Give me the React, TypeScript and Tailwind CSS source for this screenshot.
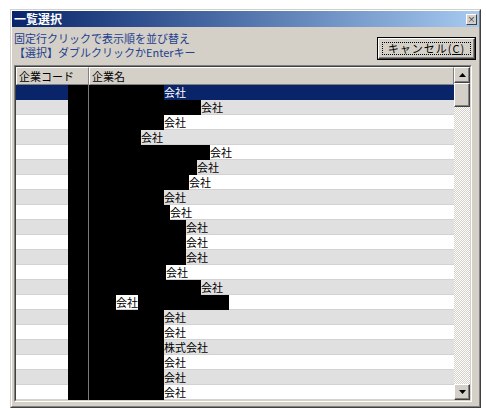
import React from "react";

type Row = { at: number; name: string; tail?: number };

// x offset (px) where each company name starts; the masked part sits before it
const rows: Row[] = [
  { at: 165, name: "会社" },
  { at: 202, name: "会社" },
  { at: 165, name: "会社" },
  { at: 142, name: "会社" },
  { at: 211, name: "会社" },
  { at: 198, name: "会社" },
  { at: 190, name: "会社" },
  { at: 165, name: "会社" },
  { at: 171, name: "会社" },
  { at: 187, name: "会社" },
  { at: 187, name: "会社" },
  { at: 187, name: "会社" },
  { at: 167, name: "会社" },
  { at: 202, name: "会社" },
  { at: 117, name: "会社", tail: 91 },
  { at: 165, name: "会社" },
  { at: 165, name: "会社" },
  { at: 165, name: "株式会社" },
  { at: 165, name: "会社" },
  { at: 165, name: "会社" },
  { at: 165, name: "会社" },
];

const COL2_X = 90;

function Arrow({ up }: { up?: boolean }) {
  return (
    <svg width="7" height="4" viewBox="0 0 7 4">
      <path d={up ? "M3.5 0L7 4H0z" : "M0 0h7L3.5 4z"} fill="#000" />
    </svg>
  );
}

function ScrollButton({ up }: { up?: boolean }) {
  return (
    <div className="w-[16px] h-[16px] flex items-center justify-center bg-[#d4d0c8] border border-t-white border-l-white border-b-[#404040] border-r-[#404040] shadow-[inset_-1px_-1px_#808080]">
      <Arrow up={up} />
    </div>
  );
}

export default function App() {
  return (
    <div className="w-[486px] h-[415px] bg-white pl-[10px] pt-[9px] font-['Noto_Sans_CJK_JP',sans-serif] text-[11px] text-black">
      {/* window frame */}
      <div className="w-[471px] h-[399px] border border-t-[#d4d0c8] border-l-[#d4d0c8] border-b-[#404040] border-r-[#404040]">
        <div className="w-full h-full flex flex-col bg-[#d4d0c8] border border-t-white border-l-white border-b-[#808080] border-r-[#808080]">
          {/* title bar */}
          <div className="h-[16px] flex items-center justify-between bg-linear-to-r from-[#0a246a] to-[#a6caf0]">
            <span className="pl-[2px] text-[12px] font-bold leading-[16px] text-white">一覧選択</span>
            <div className="mr-[2px] w-[11px] h-[11px] flex items-center justify-center bg-[#d4d0c8] border border-t-white border-l-white border-b-[#404040] border-r-[#404040]">
              <span className="text-[8px] leading-none text-[#222]">×</span>
            </div>
          </div>

          {/* hint lines + cancel */}
          <div className="h-[33px] flex justify-between">
            <div className="pl-[2px] pt-[4px] text-[#23408e]">
              <div className="h-[14px] leading-[14px]">固定行クリックで表示順を並び替え</div>
              <div className="h-[14px] leading-[14px]">【選択】ダブルクリックかEnterキー</div>
            </div>
            <div className="mt-[10px] mr-[3px] w-[99px] h-[23px] border border-black">
              <div className="w-full h-full p-[3px] border border-t-white border-l-white border-b-[#404040] border-r-[#404040] shadow-[inset_-1px_-1px_#808080]">
                <div className="w-full h-full flex items-center justify-center border border-dotted border-black leading-none tracking-[1px]">
                  キャンセル(<span className="underline">C</span>)
                </div>
              </div>
            </div>
          </div>

          {/* company list */}
          <div className="mt-[5px] ml-[2px] w-[458px] border border-t-[#808080] border-l-[#808080] border-b-white border-r-white">
            <div className="flex bg-white border border-t-[#404040] border-l-[#404040] border-b-[#d4d0c8] border-r-[#d4d0c8]">
              <div className="flex-1 flex flex-col">
                <div className="h-[18px] flex bg-[#d4d0c8]">
                  <div className="w-[73px] pl-[2px] leading-[16px] border border-t-white border-l-white border-b-[#808080] border-r-[#808080]">
                    企業コード
                  </div>
                  <div className="flex-1 pl-[2px] leading-[16px] border border-t-white border-l-white border-b-[#808080] border-r-[#808080]">
                    企業名
                  </div>
                </div>
                {rows.map((r, i) => {
                  const selected = i === 0;
                  const bg = selected
                    ? "bg-[#0a246a] text-white"
                    : i % 2
                      ? "bg-[#e0e0e0] shadow-[inset_0_-1px_0_#d2d2d2]"
                      : "bg-white shadow-[inset_0_-1px_0_#d2d2d2]";
                  return (
                    <div key={i} className={`h-[15px] flex leading-[15px] ${bg}`}>
                      <div className="w-[73px] flex border-r border-[#7a7a7a]">
                        <div className="w-[52px]" />
                        <div className="w-[20px] h-full bg-black" />
                      </div>
                      <div className="h-full bg-black" style={{ width: r.at - COL2_X }} />
                      <span className="whitespace-nowrap">{r.name}</span>
                      {r.tail ? <div className="h-full bg-black" style={{ width: r.tail }} /> : null}
                    </div>
                  );
                })}
              </div>

              {/* vertical scrollbar */}
              <div className="w-[16px] flex flex-col">
                <ScrollButton up />
                <div className="w-[16px] h-[24px] bg-[#d4d0c8] border border-t-white border-l-white border-b-[#404040] border-r-[#404040] shadow-[inset_-1px_-1px_#808080]" />
                <div className="flex-1 bg-[image:repeating-conic-gradient(#ffffff_0_25%,#d4d0c8_0_50%)] bg-[length:2px_2px]" />
                <ScrollButton />
              </div>
            </div>
          </div>
        </div>
      </div>
    </div>
  );
}
